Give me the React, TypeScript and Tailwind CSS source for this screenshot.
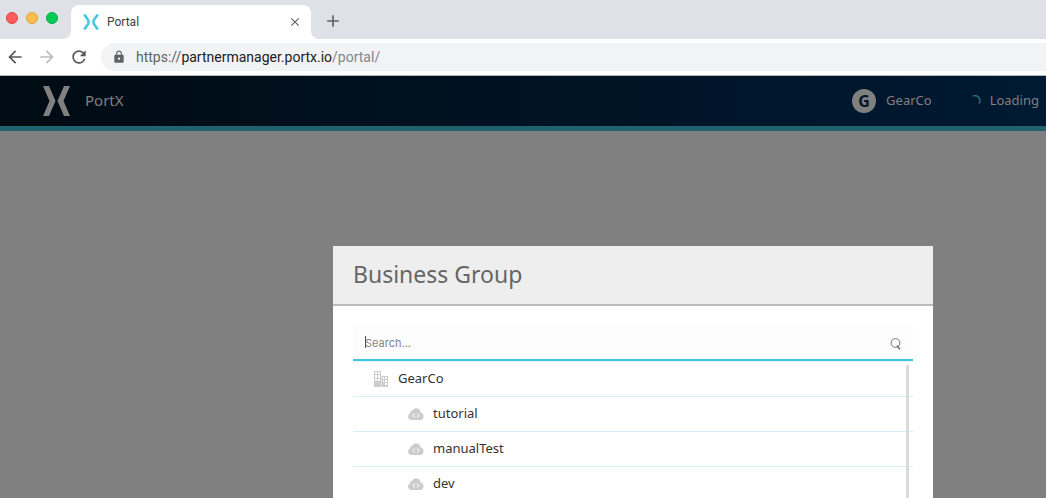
import { MdArrowBack, MdArrowForward, MdRefresh, MdLock, MdAdd, MdClose } from "react-icons/md";

function PortXMark({ className }: { className: string }) {
  return (
    <svg viewBox="0 0 27 30" className={className} fill="currentColor" aria-hidden="true">
      <path d="M0 0h6l6.5 15L6 30H0l6.5-15z" />
      <path d="M27 0h-6l-6.5 15L21 30h6l-6.5-15z" />
    </svg>
  );
}

function PortalFavicon() {
  return (
    <svg viewBox="0 0 16 16" className="size-4 shrink-0" fill="none" stroke="#45c8e4" strokeWidth="2.6" aria-hidden="true">
      <path d="M1.2.5 4.8 5.6Q6.4 8 4.8 10.4L1.2 15.5M14.8.5l-3.6 5.1Q9.6 8 11.2 10.4l3.6 5.1" />
    </svg>
  );
}

function BuildingIcon() {
  return (
    <svg viewBox="0 0 14 16" className="h-4 w-3.5 shrink-0" aria-hidden="true">
      <path fill="#cccccc" d="M0 0h7v16H0zM8 5h6v11H8z" />
      <path fill="#e4e4e4" d="M7 5h1v11H7z" />
      <path
        fill="#ffffff"
        d="M1 1h2v2H1zM4 1h2v2H4zM1 4h2v3H1zM4 4h2v3H4zM1 8h2v2H1zM4 8h2v2H4zM9 6h1v2H9zM11 6h2v2h-2zM9 9h1v2H9zM11 9h2v2h-2zM11 12h2v2h-2z"
      />
    </svg>
  );
}

function CloudCodeIcon() {
  return (
    <svg viewBox="0 0 16 12" className="h-3 w-4 shrink-0" aria-hidden="true">
      <path fill="#cccccc" d="M3.2 12a3.3 3.3 0 0 1-1-6.4A2.7 2.7 0 0 1 4.5 2.6 4.3 4.3 0 0 1 12.6 4.6 3.8 3.8 0 0 1 12.6 12z" />
      <path fill="none" stroke="#ffffff" strokeWidth="1" d="M7 5.6 4.7 7.5 7 9.4M9 5.6l2.3 1.9L9 9.4" />
    </svg>
  );
}

const environments = ["tutorial", "manualTest", "dev"];
const rowClass = "flex h-[35px] w-full items-center border-b border-[#d2f0f6] text-[13px] text-[#333333]";

function TabStrip() {
  return (
    <div className="flex h-[39px] shrink-0 items-end bg-[#dee1e6]">
      <div className="flex h-full w-[71px] shrink-0 gap-2 pt-3 pl-1.5">
        <button aria-label="Close window" className="size-3 rounded-full border border-[#e0443e] bg-[#ff5c5c]" />
        <button aria-label="Minimize window" className="size-3 rounded-full border border-[#dea034] bg-[#ffbd4c]" />
        <button aria-label="Zoom window" className="size-3 rounded-full border border-[#00b048] bg-[#00ca56]" />
      </div>
      <div className="relative flex h-[34px] w-60 items-center rounded-t-lg bg-white pr-[9px] pl-3">
        <svg viewBox="0 0 8 8" className="absolute bottom-0 -left-2 size-2" aria-hidden="true">
          <path fill="#ffffff" d="M8 0v8H0a8 8 0 0 0 8-8z" />
        </svg>
        <svg viewBox="0 0 8 8" className="absolute -right-2 bottom-0 size-2" aria-hidden="true">
          <path fill="#ffffff" d="M0 0v8h8a8 8 0 0 1-8-8z" />
        </svg>
        <PortalFavicon />
        <span className="ml-2 flex-1 font-['Roboto',sans-serif] text-xs text-[#3c4043]">Portal</span>
        <button aria-label="Close tab" className="text-[#5f6368]"><MdClose className="size-3.5" stroke="currentColor" /></button>
      </div>
      <button aria-label="New tab" className="mb-2 ml-3 text-[#5f6368]"><MdAdd className="size-5" /></button>
    </div>
  );
}

function Toolbar() {
  return (
    <div className="flex h-[37px] shrink-0 items-center border-b border-[#b4b8b9] bg-white pl-[5px]">
      <button aria-label="Back" className="text-[#55595e]"><MdArrowBack className="size-5" /></button>
      <button aria-label="Forward" className="ml-3 text-[#babcbe]"><MdArrowForward className="size-5" /></button>
      <button aria-label="Reload" className="ml-3 text-[#55595e]"><MdRefresh className="size-5" /></button>
      <div className="ml-3 flex h-7 flex-1 items-center rounded-l-full bg-[#f1f3f4] pl-[11px] font-['Roboto',sans-serif] text-sm">
        <MdLock className="size-3.5 text-[#5f6368]" />
        <a href="https://partnermanager.portx.io/portal/" className="ml-2.5 text-[#5f6368]">
          https://<span className="text-[#202124]">partnermanager.portx.io</span><span className="text-[#80868b]">/portal/</span>
        </a>
      </div>
    </div>
  );
}

export default function App() {
  return (
    <div className="flex h-screen flex-col overflow-hidden bg-[#808080] font-['Noto_Sans',sans-serif]">
      <TabStrip />
      <Toolbar />
      <header className="flex h-[55px] shrink-0 items-center border-b-5 border-[#20636f] bg-linear-to-r from-[#000b13] to-[#001a33] pr-[7px] pl-[43px] text-[13px] text-[#808080]">
        <PortXMark className="h-[30px] w-[27px]" />
        <span className="ml-[15px] pb-0.5 text-[15px]">PortX</span>
        <span className="ml-auto flex size-6 items-center justify-center rounded-full bg-[#808080] text-base font-bold text-[#001426]">G</span>
        <span className="ml-2.5">GearCo</span>
        <svg viewBox="0 0 12 12" className="ml-[38px] size-3" fill="none" aria-hidden="true">
          <path d="M3 1a5 5 0 0 1 6 7.5" stroke="#20737f" strokeWidth="1.4" />
        </svg>
        <span className="ml-2">Loading</span>
      </header>
      <main className="flex-1 pt-[115px] pr-[113px] pl-[333px]">
        <section role="dialog" aria-labelledby="dialog-title" className="bg-white">
          <div className="border-b-2 border-[#bbbbbb] bg-[#eeeeee] px-5 pt-3 pb-3.5">
            <h1 id="dialog-title" className="text-[23px] leading-8 text-[#666666]">Business Group</h1>
          </div>
          <div className="px-5 pt-5">
            <label className="relative flex h-[35px] items-center border-b-2 border-[#40c6e3] bg-[#fcfcfc] pt-0.5 pr-[11px] pl-3">
              <span className="absolute top-2.5 left-3 h-3 w-px bg-[#555555]" />
              <input type="text" aria-label="Search" placeholder="Search..." className="min-w-0 flex-1 bg-transparent font-['Inter',sans-serif] text-[11px] text-[#333333] outline-none placeholder:text-[#858585]" />
              <svg viewBox="0 0 12 12" className="size-3" fill="none" stroke="#777777" aria-hidden="true">
                <circle cx="5.5" cy="5" r="4.4" strokeWidth="1" />
                <path d="M7 7.5 9.8 11.2" strokeWidth="1.7" />
              </svg>
            </label>
            <div className="relative border-t border-[#e3f6fa]">
              <button className={`${rowClass} gap-2.5 pl-[21px]`}><BuildingIcon />GearCo</button>
              {environments.map((name) => (
                <button key={name} className={`${rowClass} gap-[9px] pl-[55px]`}><CloudCodeIcon />{name}</button>
              ))}
              <span className="absolute top-[3px] right-1 bottom-0 w-[3px] bg-[#dadada]" />
            </div>
          </div>
        </section>
      </main>
    </div>
  );
}
